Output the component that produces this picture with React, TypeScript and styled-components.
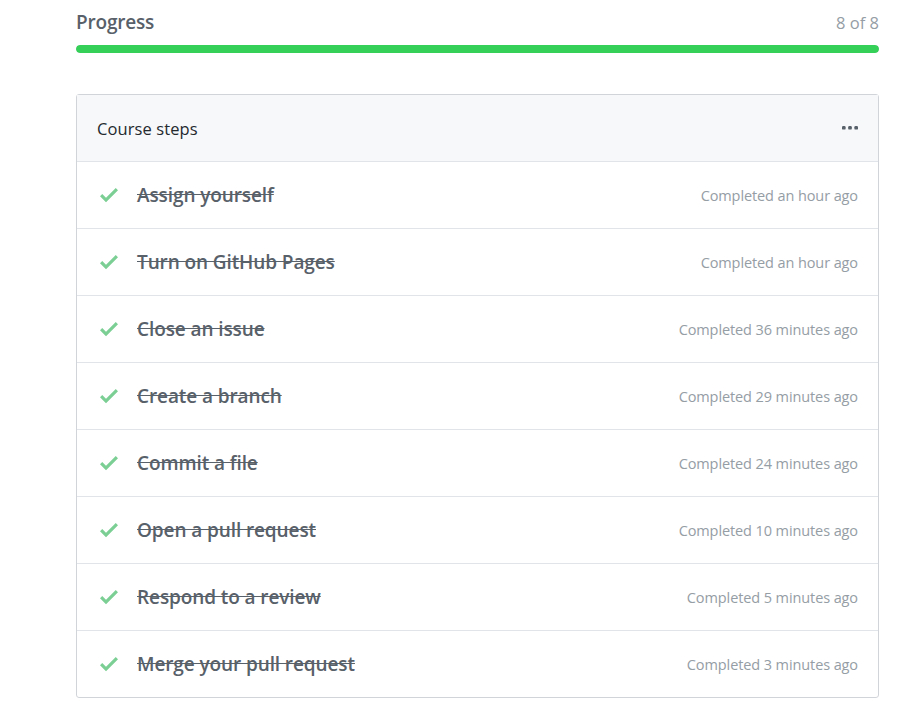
import React from "react";
import styled, { createGlobalStyle } from "styled-components";

const Global = createGlobalStyle`
  html, body { margin: 0; padding: 0; background: #fff; }
  body { font-family: "Open Sans", "Noto Sans", sans-serif; -webkit-font-smoothing: antialiased; }
`;

const Page = styled.div`
  width: 803px;
  padding: 9px 0 0 76px;
`;

const ProgressHead = styled.div`
  display: flex;
  justify-content: space-between;
  align-items: baseline;
  height: 28px;
`;

const ProgressTitle = styled.h2`
  margin: 0;
  font-size: 19px;
  font-weight: 600;
  color: #586069;
  letter-spacing: -0.2px;
`;

const ProgressCount = styled.span`
  font-size: 16.5px;
  color: #959da5;
`;

const Bar = styled.div`
  margin-top: 8px;
  height: 8px;
  border-radius: 4px;
  background: #e1e4e8;
  overflow: hidden;
`;

const Fill = styled.div`
  height: 100%;
  background: #34d058;
  border-radius: 4px;
`;

const Card = styled.div`
  margin-top: 41px;
  width: 801px;
  border: 1px solid #d1d5da;
  border-radius: 3px;
`;

const CardHeader = styled.div`
  display: flex;
  align-items: center;
  justify-content: space-between;
  height: 66px;
  padding: 0 20px;
  background: #f6f8fa;
  border-bottom: 1px solid #e1e4e8;
`;

const CardTitle = styled.h3`
  margin: 0;
  font-size: 16.5px;
  font-weight: 400;
  color: #24292e;
  letter-spacing: 0.1px;
`;

const Row = styled.div<{ $last?: boolean }>`
  display: flex;
  align-items: center;
  height: 66px;
  padding: 0 20px 0 23px;
  border-bottom: ${(p) => (p.$last ? "none" : "1px solid #e1e4e8")};
`;

const Check = styled.svg`
  width: 18px;
  height: 15px;
  flex: none;
  margin-right: 19px;
  fill: #7ccf94;
`;

const StepTitle = styled.span`
  flex: 1;
  font-size: 19px;
  font-weight: 600;
  color: #586069;
  text-decoration: line-through;
  text-decoration-color: #586069;
  letter-spacing: -0.1px;
`;

const StepTime = styled.span`
  font-size: 14.5px;
  color: #959da5;
  letter-spacing: -0.1px;
`;

const Dots = styled.svg`
  width: 16px;
  height: 4px;
  fill: #586069;
`;

const steps: [string, string][] = [
  ["Assign yourself", "Completed an hour ago"],
  ["Turn on GitHub Pages", "Completed an hour ago"],
  ["Close an issue", "Completed 36 minutes ago"],
  ["Create a branch", "Completed 29 minutes ago"],
  ["Commit a file", "Completed 24 minutes ago"],
  ["Open a pull request", "Completed 10 minutes ago"],
  ["Respond to a review", "Completed 5 minutes ago"],
  ["Merge your pull request", "Completed 3 minutes ago"],
];

export default function App() {
  return (
    <>
      <Global />
      <Page>
        <ProgressHead>
          <ProgressTitle>Progress</ProgressTitle>
          <ProgressCount>8 of 8</ProgressCount>
        </ProgressHead>
        <Bar>
          <Fill style={{ width: `${(8 / 8) * 100}%` }} />
        </Bar>
        <Card>
          <CardHeader>
            <CardTitle>Course steps</CardTitle>
            <Dots viewBox="0 0 16 4">
              <rect x="0" y="0" width="3.6" height="3.6" rx="1.2" />
              <rect x="6.2" y="0" width="3.6" height="3.6" rx="1.2" />
              <rect x="12.4" y="0" width="3.6" height="3.6" rx="1.2" />
            </Dots>
          </CardHeader>
          {steps.map(([t, c], i) => (
            <Row key={t} $last={i === steps.length - 1}>
              <Check viewBox="0 0 12 10">
                <path d="M12 1.5 4 9.5 0 5.5 1.5 4 4 6.5 10.5 0z" />
              </Check>
              <StepTitle>{t}</StepTitle>
              <StepTime>{c}</StepTime>
            </Row>
          ))}
        </Card>
      </Page>
    </>
  );
}
